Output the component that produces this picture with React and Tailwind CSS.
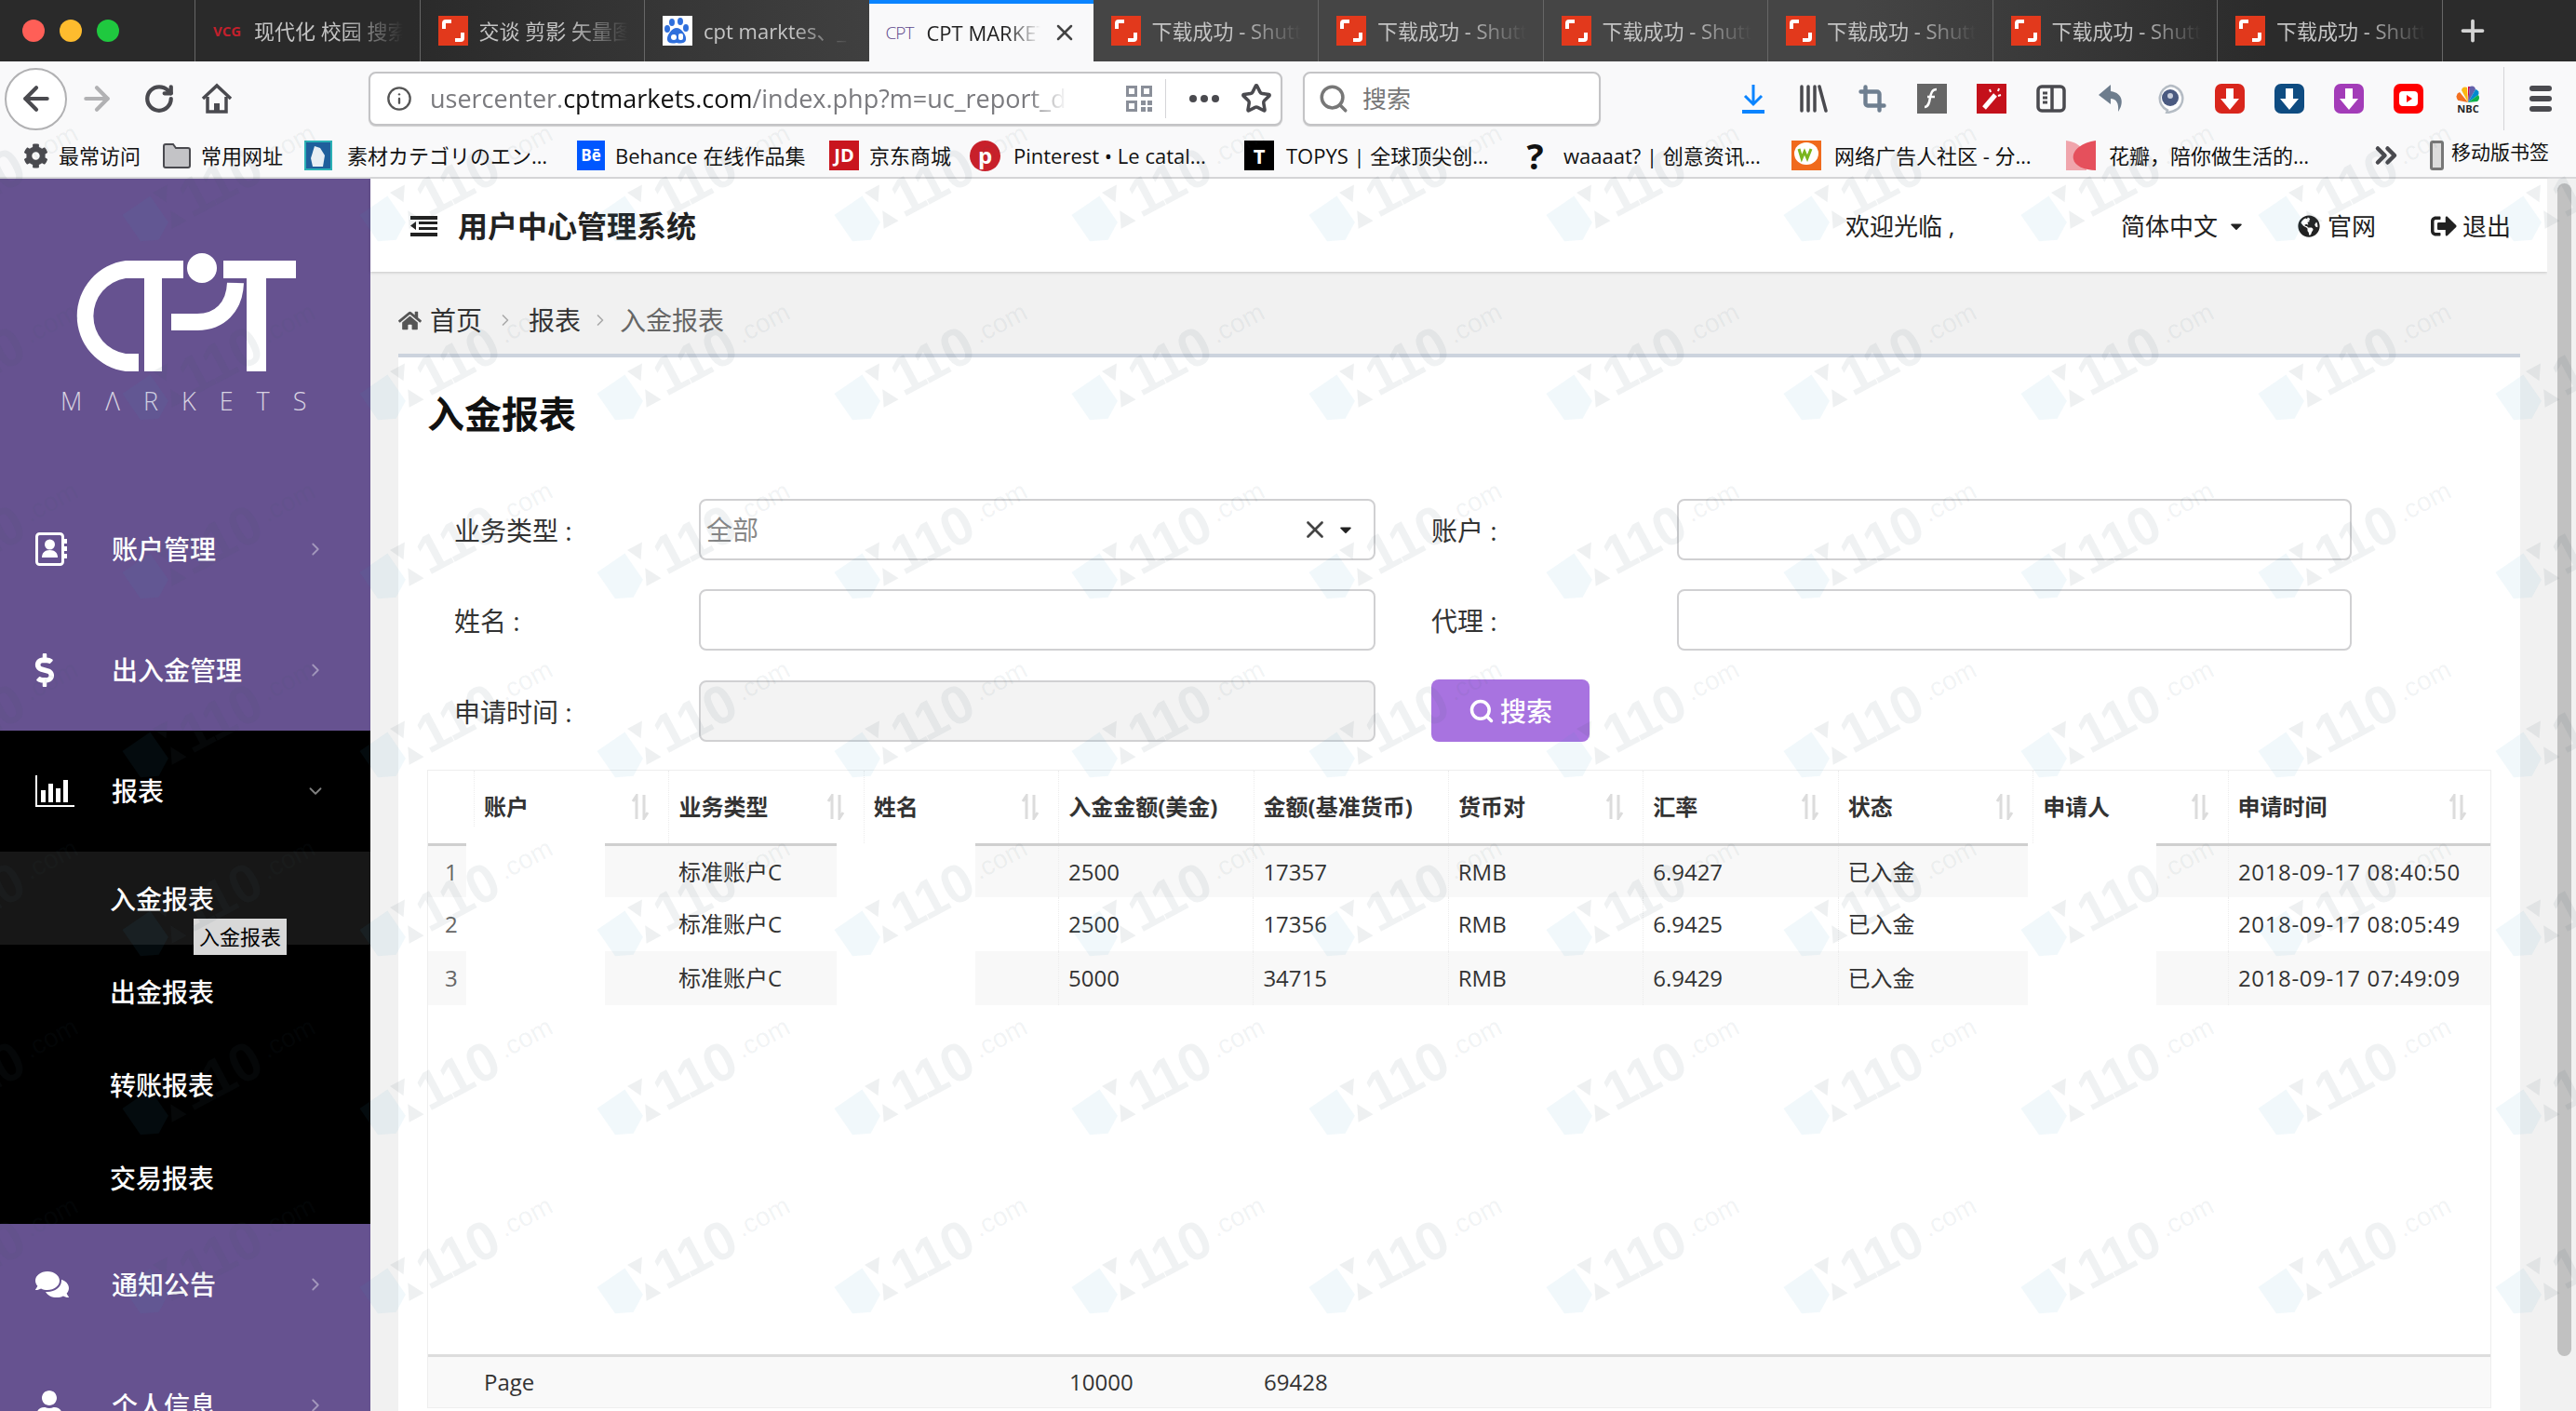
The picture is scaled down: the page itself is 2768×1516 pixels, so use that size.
import { ArrowLeft, ArrowRight, RotateCw, Info, Star, Search, Crop, X, ChevronRight, ChevronDown, ChevronsRight, Plus } from 'lucide-react'
import { FaCog, FaHome, FaGlobeAmericas, FaSignOutAlt, FaDollarSign, FaComments, FaUser, FaCaretDown } from 'react-icons/fa'

function ShutterIcon() {
  return (
    <svg width="32" height="32" viewBox="0 0 32 32" className="shrink-0">
      <rect width="32" height="32" fill="#e2391c" />
      <path d="M6 14V8a2 2 0 0 1 2-2h6M26 18v6a2 2 0 0 1-2 2h-6" stroke="#fff" strokeWidth="4" fill="none" />
    </svg>
  )
}

function BaiduIcon() {
  return (
    <svg width="32" height="32" viewBox="0 0 32 32" className="shrink-0">
      <rect width="32" height="32" fill="#fff" />
      <g fill="#2f6fdc">
        <ellipse cx="10" cy="7" rx="3" ry="4" />
        <ellipse cx="19" cy="6" rx="3" ry="4" />
        <ellipse cx="5" cy="14" rx="3" ry="4" />
        <ellipse cx="25" cy="13" rx="3" ry="4" />
        <path d="M15 13c5 0 11 8 10 13-1 4-6 4-10 3-4 1-9 1-10-3-1-5 5-13 10-13z" />
      </g>
      <circle cx="12" cy="23" r="3" fill="#fff" />
      <rect x="17" y="19" width="5" height="7" rx="2" fill="#fff" />
    </svg>
  )
}

const tabs = [
  { icon: <span className="w-[32px] shrink-0 text-[15px] font-bold text-[#c2202c]">VCG</span>, label: '现代化 校园 搜索' },
  { icon: <ShutterIcon />, label: '交谈 剪影 矢量图' },
  { icon: <BaiduIcon />, label: 'cpt marktes、_' },
  { icon: <span className="w-[32px] shrink-0 text-[19px] font-light tracking-tighter text-[#5f4a8c]">CPT</span>, label: 'CPT MARKETS', active: true },
  ...Array.from({ length: 6 }, () => ({ icon: <ShutterIcon />, label: '下载成功 - Shutterstock' })),
]

function TabBar() {
  return (
    <div className="flex h-[66px] bg-[linear-gradient(90deg,#2a2a2a_16%,#454545_38%,#454545_72%,#2b2b2b_88%)]">
      <div className="flex w-[209px] items-center gap-[16px] pl-[24px]">
        <span className="h-[24px] w-[24px] rounded-full bg-[#ff5f57]" />
        <span className="h-[24px] w-[24px] rounded-full bg-[#febc2e]" />
        <span className="h-[24px] w-[24px] rounded-full bg-[#1fc93f]" />
      </div>
      {tabs.map((t, i) =>
        t.active ? (
          <div key={i} className="flex w-[241px] items-center gap-[12px] border-t-[4px] border-[#0a84ff] bg-[#f9f9fa] pl-[18px]">
            {t.icon}
            <span className="w-[122px] overflow-hidden text-[22px] whitespace-nowrap text-[#222] [mask-image:linear-gradient(90deg,#000_70%,transparent)]">{t.label}</span>
            <X size={28} strokeWidth={2.2} className="shrink-0 text-[#444]" />
          </div>
        ) : (
          <div key={i} className={`flex w-[241.5px] items-center gap-[12px] pl-[19px] ${tabs[i - 1]?.active ? '' : 'border-l border-[#666]'}`}>
            {t.icon}
            <span className="w-[160px] overflow-hidden text-[22px] whitespace-nowrap text-[#c4c4c4] [mask-image:linear-gradient(90deg,#000_60%,transparent)]">{t.label}</span>
          </div>
        )
      )}
      <div className="flex flex-1 items-center border-l border-[#666] pl-[14px]">
        <Plus size={36} strokeWidth={2.5} className="text-[#d4d4d4]" />
      </div>
    </div>
  )
}

function ArrowDl({ bg }) {
  return (
    <svg width="32" height="32" viewBox="0 0 32 32">
      <rect width="32" height="32" rx="7" className={bg} />
      <path d="M12 5h8v11h6L16 28 6 16h6z" fill="#fff" />
    </svg>
  )
}

function ToolbarIcons() {
  const box = 'flex h-[32px] w-[32px] items-center justify-center'
  return (
    <div className="ml-[148px] flex items-center gap-[32px]">
      <div className={box}>
        <svg width="26" height="32" viewBox="0 0 26 32" fill="none" stroke="#0a84ff" strokeWidth="3">
          <path d="M13 1v20M4 13l9 9 9-9" />
          <path d="M1 30h24" strokeWidth="4" />
        </svg>
      </div>
      <div className={box}>
        <svg width="31" height="30" viewBox="0 0 31 30" fill="none" stroke="#4a4a4f" strokeWidth="3.5" strokeLinecap="round">
          <path d="M3 2v26M10 2v26M17 2v26M22 2l7 26" />
        </svg>
      </div>
      <div className={box}>
        <Crop size={30} strokeWidth={3.5} className="text-[#6f7f90]" />
      </div>
      <div className={box}>
        <svg width="32" height="32" viewBox="0 0 32 32">
          <rect width="32" height="32" fill="#666" />
          <path d="M21 6c-5 0-6 4-7 9-1 6-2 10-6 10M11 14h8" stroke="#fff" strokeWidth="2.5" fill="none" />
        </svg>
      </div>
      <div className={box}>
        <svg width="32" height="32" viewBox="0 0 32 32">
          <rect width="32" height="32" fill="#c4111b" />
          <path d="M8 26l12-14" stroke="#fff" strokeWidth="5" />
          <path d="M14 6l1 3M24 5l-1 3M26 12l-3 1" stroke="#fff" strokeWidth="2" />
        </svg>
      </div>
      <div className={box}>
        <svg width="32" height="30" viewBox="0 0 32 30" fill="none" stroke="#4a4a4f" strokeWidth="3.5">
          <rect x="2" y="2" width="28" height="26" rx="4" />
          <path d="M17 2v26" />
          <path d="M7 9h5M7 14h5M7 19h5" strokeWidth="3" />
        </svg>
      </div>
      <div className={box}>
        <svg width="28" height="32" viewBox="0 0 28 32" fill="#6e7d8d">
          <path d="M14 1L1 12l13 10v-6c6 0 9 5 8 14 6-8 6-20-8-22z" />
        </svg>
      </div>
      <div className={box}>
        <svg width="32" height="32" viewBox="0 0 32 32">
          <path d="M16 2a14 14 0 0 1 3 27.500l-7 2 1-3A14 14 0 0 1 16 2z" fill="#fff" stroke="#b5bcc4" strokeWidth="2.500" />
          <circle cx="16" cy="15" r="9" fill="#4a5a80" />
          <circle cx="16" cy="13" r="3" fill="#c9cfdc" />
        </svg>
      </div>
      <div className={box}><ArrowDl bg="fill-[#d9261c]" /></div>
      <div className={box}><ArrowDl bg="fill-[#0f4c81]" /></div>
      <div className={box}><ArrowDl bg="fill-[#a33cb8]" /></div>
      <div className={box}>
        <svg width="32" height="32" viewBox="0 0 32 32">
          <rect width="32" height="32" rx="7" fill="#ff0000" />
          <rect x="6" y="8" width="20" height="16" rx="4" fill="#fff" />
          <path d="M14 12l6 4-6 4z" fill="#f00" />
        </svg>
      </div>
      <div className={box}>
        <svg width="32" height="32" viewBox="0 0 32 32">
          <path d="M16 20L6 18a5 5 0 0 1 1-9z" fill="#f37021" />
          <path d="M16 20L9 7a4 4 0 0 1 6-3z" fill="#fcb711" />
          <path d="M16 20V3h2z" fill="#cc004c" />
          <path d="M16 20l2-17a4 4 0 0 1 6 3z" fill="#6460aa" />
          <path d="M16 20l8-14a4 4 0 0 1 3 6z" fill="#0089d0" />
          <path d="M16 20l11-8a5 5 0 0 1-1 7z" fill="#0db14b" />
          <text x="16" y="31" textAnchor="middle" fontSize="11" fontWeight="700" fill="#222">NBC</text>
        </svg>
      </div>
      <div className="-ml-[10px] h-[68px] w-px bg-[#d5d5d8]" />
      <div className="-ml-[5px] flex w-[24px] flex-col gap-[5px]">
        <span className="h-[6px] rounded-full bg-[#4a4a4f]" />
        <span className="h-[6px] rounded-full bg-[#4a4a4f]" />
        <span className="h-[6px] rounded-full bg-[#4a4a4f]" />
      </div>
    </div>
  )
}

function Toolbar() {
  return (
    <div className="flex h-[80px] items-center bg-[#f9f9fa] pl-[5px]">
      <div className="flex h-[67px] w-[67px] items-center justify-center rounded-full border-2 border-[#b1b1b3] bg-white">
        <ArrowLeft size={40} strokeWidth={2.5} className="text-[#4a4a4f]" />
      </div>
      <ArrowRight size={40} strokeWidth={2.5} className="ml-[12px] text-[#b1b1b3]" />
      <RotateCw size={34} strokeWidth={3} className="ml-[30px] text-[#4a4a4f]" />
      <svg width="34" height="34" viewBox="0 0 34 34" fill="none" stroke="#4a4a4f" strokeWidth="3.5" className="ml-[28px]">
        <path d="M2 17L17 3l15 14" />
        <path d="M7 15v16h20V15" />
        <rect x="14" y="22" width="6" height="9" fill="#4a4a4f" stroke="none" />
      </svg>
      <div className="ml-[146px] flex h-[58px] w-[982px] items-center rounded-[8px] border-2 border-[#c4c4c6] bg-white shadow-[0_1px_1px_#ccc]">
        <Info size={28} strokeWidth={2} className="ml-[17px] shrink-0 text-[#555]" />
        <div className="ml-[19px] w-[685px] overflow-hidden text-[27px] whitespace-nowrap text-[#7a7a7e] [mask-image:linear-gradient(90deg,#000_94%,transparent)]">
          usercenter.<span className="text-[#111]">cptmarkets.com</span>/index.php?m=uc_report_deposit
        </div>
        <svg width="28" height="28" viewBox="0 0 28 28" fill="#8a8f99" className="ml-[63px] shrink-0">
          <path d="M0 0h12v12H0zM3 3v6h6V3zM16 0h12v12H16zM19 3v6h6V3zM0 16h12v12H0zM3 19v6h6v-6zM16 16h5v5h-5zM23 16h5v5h-5zM16 23h5v5h-5zM23 23h5v5h-5z" fillRule="evenodd" />
        </svg>
        <div className="ml-[14px] h-[42px] w-px bg-[#d5d5d8]" />
        <div className="ml-[25px] flex gap-[4px]">
          <span className="h-[8px] w-[8px] rounded-full bg-[#4a4a4f]" />
          <span className="h-[8px] w-[8px] rounded-full bg-[#4a4a4f]" />
          <span className="h-[8px] w-[8px] rounded-full bg-[#4a4a4f]" />
        </div>
        <Star size={34} strokeWidth={2.5} className="ml-[23px] text-[#4a4a4f]" />
      </div>
      <div className="ml-[22px] flex h-[58px] w-[320px] items-center rounded-[8px] border-2 border-[#c4c4c6] bg-white shadow-[0_1px_1px_#ccc]">
        <Search size={34} strokeWidth={2.5} className="ml-[14px] text-[#777]" />
        <span className="ml-[14px] text-[26px] text-[#777]">搜索</span>
      </div>
      <ToolbarIcons />
    </div>
  )
}

const bookmarks = [
  { w: 'w-[150px]', icon: <FaCog size={27} className="text-[#4a4a4f]" />, label: '最常访问' },
  {
    w: 'w-[152px]',
    icon: (
      <svg width="30" height="28" viewBox="0 0 30 28">
        <path d="M1 4a2 2 0 0 1 2-2h8l3 4h13a2 2 0 0 1 2 2v17a2 2 0 0 1-2 2H3a2 2 0 0 1-2-2z" fill="#c3c3c6" stroke="#4a4a4f" strokeWidth="2" />
      </svg>
    ),
    label: '常用网址',
  },
  {
    w: 'w-[293px]',
    gap: 'gap-[16px]',
    icon: (
      <svg width="30" height="32" viewBox="0 0 30 32">
        <rect x="1" y="1" width="28" height="30" fill="#1f5f9c" stroke="#2bb0b5" strokeWidth="2" />
        <path d="M11 6l6 2 5 8-2 12H9l-2-9z" fill="#e8eef4" />
      </svg>
    ),
    label: '素材カテゴリのエン…',
  },
  { w: 'w-[271px]', icon: <span className="flex h-[32px] w-[30px] shrink-0 items-center justify-center bg-[#0057ff] text-[17px] font-bold text-white">Bē</span>, label: 'Behance 在线作品集' },
  { w: 'w-[151px]', icon: <span className="flex h-[32px] w-[32px] shrink-0 items-center justify-center bg-[#c9151e] text-[20px] font-bold text-white">JD</span>, label: '京东商城' },
  { w: 'w-[295px]', gap: 'gap-[14px]', icon: <span className="flex h-[33px] w-[33px] shrink-0 items-center justify-center rounded-full bg-[#c8202a] text-[24px] font-bold text-white">p</span>, label: 'Pinterest • Le catal…' },
  { w: 'w-[293px]', gap: 'gap-[13px]', icon: <span className="flex h-[32px] w-[32px] shrink-0 items-center justify-center bg-black text-[22px] font-bold text-white">T</span>, label: 'TOPYS | 全球顶尖创…' },
  { w: 'w-[295px]', icon: <span className="flex w-[39px] shrink-0 justify-center text-[38px] leading-none font-bold text-[#111]">?</span>, label: 'waaaat? | 创意资讯…' },
  {
    w: 'w-[295px]',
    gap: 'gap-[14px]',
    icon: (
      <svg width="32" height="32" viewBox="0 0 32 32">
        <rect width="32" height="32" fill="#f06a1d" />
        <ellipse cx="16" cy="14" rx="13" ry="12" fill="#fff" />
        <path d="M8 9l3 10 3-7 3 7 4-10" stroke="#7ab51d" strokeWidth="3" fill="none" />
      </svg>
    ),
    label: '网络广告人社区 - 分…',
  },
  {
    w: 'w-[330px]',
    gap: 'gap-[14px]',
    icon: (
      <svg width="32" height="32" viewBox="0 0 32 32">
        <path d="M0 0c14 2 22 8 22 32H0z" fill="#f0a5ac" />
        <path d="M32 0C18 2 6 10 8 20c1 7 12 12 24 12z" fill="#e5505c" />
      </svg>
    ),
    label: '花瓣，陪你做生活的…',
  },
]

function BookmarksBar() {
  return (
    <div className="flex h-[46px] items-center border-b-2 border-[#d8d8da] bg-[#f9f9fa] pb-[2px] pl-[25px]">
      {bookmarks.map((b, i) => (
        <div key={i} className={`flex shrink-0 items-center text-[22px] whitespace-nowrap text-[#111] ${b.gap || 'gap-[11px]'} ${b.w}`}>
          {b.icon}
          <span>{b.label}</span>
        </div>
      ))}
      <div className="w-[61px] shrink-0">
        <ChevronsRight size={36} strokeWidth={3} className="-ml-[4px] text-[#4a4a4f]" />
      </div>
      <div className="flex items-center gap-[8px] text-[21px] whitespace-nowrap text-[#111]">
        <span className="h-[32px] w-[15px] rounded-[3px] border-[3px] border-[#777] bg-[#ddd]" />
        <span className="-mt-[6px]">移动版书签</span>
      </div>
    </div>
  )
}

function ChartIcon() {
  return (
    <svg width="42" height="34" viewBox="0 0 42 34" fill="#fff">
      <path d="M0 0h2v32h40v2H0z" />
      <rect x="6" y="16" width="5" height="13" />
      <rect x="14" y="9" width="5" height="20" />
      <rect x="22" y="14" width="5" height="15" />
      <rect x="30" y="5" width="5" height="24" />
    </svg>
  )
}

function AccountIcon() {
  return (
    <svg width="34" height="36" viewBox="0 0 34 36" fill="#fff">
      <rect x="1.500" y="1.500" width="28" height="33" rx="3" fill="none" stroke="#fff" strokeWidth="3" />
      <circle cx="15.500" cy="13" r="5.500" />
      <path d="M7 27c0-5 3-8 8.500-8s8.500 3 8.500 8z" />
      <path d="M31 7h3v5h-3zM31 15h3v5h-3zM31 23h3v5h-3z" />
    </svg>
  )
}

function NavItem({ icon, label, open, active }) {
  return (
    <div className={`flex h-[130px] shrink-0 items-center pr-[48px] pl-[38px] ${active ? 'bg-black' : ''}`}>
      <div className="flex w-[82px] text-white">{icon}</div>
      <span className="flex-1 text-[28px] font-medium text-white">{label}</span>
      {open ? <ChevronDown size={22} className="text-white/50" /> : <ChevronRight size={22} className="text-white/40" />}
    </div>
  )
}

function SubItem({ label, active }) {
  return (
    <div className={`relative flex h-[100px] items-center pt-[2px] pl-[118px] text-[28px] font-medium text-white ${active ? 'bg-[#171717]' : ''}`}>
      {label}
      {active && (
        <div className="absolute top-[72px] left-[208px] z-10 flex h-[39px] w-[100px] items-center justify-center bg-[#d8d8d8] text-[22px] font-normal text-black">
          入金报表
        </div>
      )}
    </div>
  )
}

function Sidebar() {
  return (
    <aside className="flex w-[398px] shrink-0 flex-col overflow-hidden bg-[#665290]">
      <div className="flex h-[333px] shrink-0 flex-col pt-[80px] pl-[65px]">
        <svg width="243" height="128" viewBox="0 0 243 128" fill="#fff" className="ml-[10px]">
          <path d="M60 8A60 60 0 0 0 60 127h14v-19H60A41 41 0 0 1 60 27z" />
          <rect x="60" y="8" width="62" height="19" />
          <rect x="80" y="8" width="19" height="119" />
          <circle cx="142" cy="16" r="16" />
          <path d="M109 74h28c24 0 40-16 41-42" fill="none" stroke="#fff" strokeWidth="18" />
          <rect x="165" y="8" width="78" height="19" />
          <rect x="190" y="8" width="21" height="119" />
        </svg>
        <div className="mt-[16px] w-[270px] text-[27px] leading-[30px] font-light tracking-[25px] whitespace-nowrap text-white/75">MΛRKETS</div>
      </div>
      <NavItem icon={<AccountIcon />} label="账户管理" />
      <NavItem icon={<FaDollarSign size={36} className="-ml-[8px]" />} label="出入金管理" />
      <NavItem icon={<ChartIcon />} label="报表" open active />
      <div className="shrink-0 bg-black">
        <SubItem label="入金报表" active />
        <SubItem label="出金报表" />
        <SubItem label="转账报表" />
        <SubItem label="交易报表" />
      </div>
      <NavItem icon={<FaComments size={36} />} label="通知公告" />
      <NavItem icon={<FaUser size={32} className="-ml-[1px]" />} label="个人信息" />
    </aside>
  )
}

function PageHeader() {
  return (
    <div className="flex h-[100px] shrink-0 items-center bg-white pt-[2px] pl-[43px] text-[#222] shadow-[0_1px_3px_rgba(0,0,0,0.18)]">
      <svg width="29" height="22" viewBox="0 0 29 22" fill="#222">
        <path d="M0 0h29v4H0zM9 6h20v3H9zM9 12h20v3H9zM0 18h29v4H0zM6 6v9l-6-4.500z" />
      </svg>
      <span className="ml-[22px] text-[32px] font-bold">用户中心管理系统</span>
      <span className="ml-[1235px] w-[296px] text-[26px]">欢迎光临 ,</span>
      <span className="text-[26px]">简体中文</span>
      <FaCaretDown size={20} className="ml-[10px]" />
      <FaGlobeAmericas size={24} className="ml-[56px]" />
      <span className="ml-[8px] text-[26px]">官网</span>
      <FaSignOutAlt size={28} className="ml-[59px]" />
      <span className="ml-[6px] text-[26px]">退出</span>
    </div>
  )
}

function Breadcrumb() {
  return (
    <div className="flex h-[88px] shrink-0 items-center pt-[16px] pl-[30px] text-[28px] text-[#333]">
      <FaHome size={25} className="text-[#555]" />
      <span className="ml-[9px]">首页</span>
      <ChevronRight size={20} className="mx-[15px] text-[#aaa]" />
      <span>报表</span>
      <ChevronRight size={20} className="mx-[11px] text-[#aaa]" />
      <span className="text-[#666]">入金报表</span>
    </div>
  )
}

const inputCls = 'h-[66px] rounded-[8px] border-2 border-[#d0d0d2]'

function FilterForm() {
  return (
    <div className="mt-[70px] grid grid-cols-[292px_727px_60px_264px_725px] items-center gap-y-[31px] text-[28px] text-[#333]">
      <span className="pt-[2px] pl-[29px]">业务类型 :</span>
      <div className={`${inputCls} flex items-center bg-white pr-[20px] pl-[6px] text-[#888]`}>
        <span className="flex-1">全部</span>
        <X size={30} strokeWidth={2.2} className="text-[#444]" />
        <FaCaretDown size={20} className="ml-[8px] text-[#222]" />
      </div>
      <span />
      <span className="pt-[2px]">账户 :</span>
      <div className={`${inputCls} bg-white`} />
      <span className="pt-[2px] pl-[29px]">姓名 :</span>
      <div className={`${inputCls} bg-white`} />
      <span />
      <span className="pt-[2px]">代理 :</span>
      <div className={`${inputCls} bg-white`} />
      <span className="pt-[2px] pl-[29px]">申请时间 :</span>
      <div className={`${inputCls} bg-[#f3f3f3]`} />
      <span />
      <div className="flex h-[67px] w-[170px] items-center justify-center gap-[6px] rounded-[8px] bg-[#a873e0] font-medium text-white">
        <Search size={28} strokeWidth={3} />
        搜索
      </div>
    </div>
  )
}

function SortIcon() {
  return (
    <svg width="20" height="28" viewBox="0 0 20 28" fill="none" stroke="#dcdcdc" strokeWidth="3">
      <path d="M6 27V2L2 8" />
      <path d="M14 1v25l4-6" />
    </svg>
  )
}

const columns = [
  { label: '账户', sort: true },
  { label: '业务类型', sort: true },
  { label: '姓名', sort: true },
  { label: '入金金额(美金)' },
  { label: '金额(基准货币)' },
  { label: '货币对', sort: true },
  { label: '汇率', sort: true },
  { label: '状态', sort: true },
  { label: '申请人', sort: true },
  { label: '申请时间', sort: true },
]

const rows = [
  { n: 1, usd: '2500', base: '17357', rate: '6.9427', time: '2018-09-17 08:40:50' },
  { n: 2, usd: '2500', base: '17356', rate: '6.9425', time: '2018-09-17 08:05:49' },
  { n: 3, usd: '5000', base: '34715', rate: '6.9429', time: '2018-09-17 07:49:09' },
]

function DataRow({ row, index }) {
  const bg = index % 2 === 0 ? 'bg-[#f8f8f8]' : 'bg-white'
  const line = index === 0 ? 'border-t-[3px] border-[#cfcfcf]' : ''
  const seg = `flex h-[58px] items-center ${bg} ${line}`
  const cell = 'flex h-full w-[209.4px] items-center border-r border-dotted border-[#ececec] pl-[10px]'
  return (
    <div className="flex text-[24px] text-[#333]">
      <div className={`${seg} w-[41px] pl-[18px] text-[#666]`}>{row.n}</div>
      <div className="w-[149px]" />
      <div className={`${seg} w-[249px] pl-[79px]`}>标准账户C</div>
      <div className="w-[149px]" />
      <div className={`${seg} w-[1131px]`}>
        <div className="h-full w-[90px] border-r border-dotted border-[#ececec]" />
        <div className={cell}>{row.usd}</div>
        <div className={cell}>{row.base}</div>
        <div className={cell}>RMB</div>
        <div className={cell}>{row.rate}</div>
        <div className="pl-[10px]">已入金</div>
      </div>
      <div className="w-[138px]" />
      <div className={`${seg} flex-1`}>
        <div className="h-full w-[78px] border-r border-dotted border-[#ececec]" />
        <div className="pl-[10px] tracking-[0.65px] whitespace-nowrap">{row.time}</div>
      </div>
    </div>
  )
}

function ReportTable() {
  return (
    <div className="mt-[30px] flex h-[686px] flex-col border border-[#eee]">
      <div className="flex h-[78px] shrink-0 text-[24px] font-bold text-[#333]">
        <div className="h-[60px] w-[50px] border-r border-dotted border-[#ececec]" />
        {columns.map((c, i) => (
          <div key={i} className={`flex h-[78px] items-center justify-between border-r border-dotted border-[#ececec] pl-[10px] ${i === 9 ? 'flex-1 border-none pr-[25px]' : 'w-[209.4px] pr-[20px]'}`}>
            <span className="whitespace-nowrap">{c.label}</span>
            {c.sort && <SortIcon />}
          </div>
        ))}
      </div>
      {rows.map((r, i) => (
        <DataRow key={r.n} row={r} index={i} />
      ))}
      <div className="flex-1" />
      <div className="flex h-[57px] shrink-0 items-center border-t-[3px] border-[#ddd] bg-[#f9f9f9] text-[24px] text-[#333]">
        <div className="w-[60px]" />
        <div className="w-[629px]">Page</div>
        <div className="w-[209px]">10000</div>
        <div>69428</div>
      </div>
    </div>
  )
}

function Watermarks() {
  return (
    <div className="pointer-events-none absolute top-[99px] left-[-145px] z-50 grid grid-cols-[repeat(12,255px)] auto-rows-[192px]">
      {Array.from({ length: 84 }, (_, i) => (
        <div key={i} className="flex items-center justify-center">
          <div className="flex -rotate-[28deg] items-center whitespace-nowrap">
            <svg width="66" height="56" viewBox="0 0 66 56" className="shrink-0">
              <path d="M2 10l36-4 4 34-18 12L6 44z" fill="#3a9cc4" fillOpacity="0.07" />
              <path d="M42 4l18 0-10 16z" fill="#3d5a66" fillOpacity="0.09" />
              <path d="M50 30l10 18-18 0z" fill="#3d5a66" fillOpacity="0.09" />
            </svg>
            <span className="text-[58px] leading-none font-bold tracking-[-1px] text-[#3d5a66]/8 [font-family:'Liberation_Sans',sans-serif]">110</span>
            <span className="-mt-[2px] ml-[8px] text-[28px] leading-none text-[#3d5a66]/8 [font-family:'Liberation_Sans',sans-serif]">.com</span>
          </div>
        </div>
      ))}
    </div>
  )
}

export default function App() {
  return (
    <div className="relative flex h-screen flex-col overflow-hidden bg-white font-['Open_Sans','Noto_Sans_CJK_SC',sans-serif]">
      <TabBar />
      <Toolbar />
      <BookmarksBar />
      <div className="flex min-h-0 flex-1">
        <Sidebar />
        <main className="flex min-w-0 flex-1 flex-col bg-[#f1f1f1]">
          <PageHeader />
          <Breadcrumb />
          <div className="mr-[29px] ml-[30px] flex-1 border-t-[4px] border-[#ccd3dd] bg-white px-[31px]">
            <h1 className="pt-[40px] text-[40px] leading-[42px] font-semibold text-[#111]">入金报表</h1>
            <FilterForm />
            <ReportTable />
          </div>
        </main>
        <div className="w-[31px] shrink-0 bg-[#f1f1f1] pt-[5px] pl-[11px]">
          <div className="h-[1260px] w-[15px] rounded-full bg-[#c1c1c1]" />
        </div>
      </div>
      <Watermarks />
    </div>
  )
}
